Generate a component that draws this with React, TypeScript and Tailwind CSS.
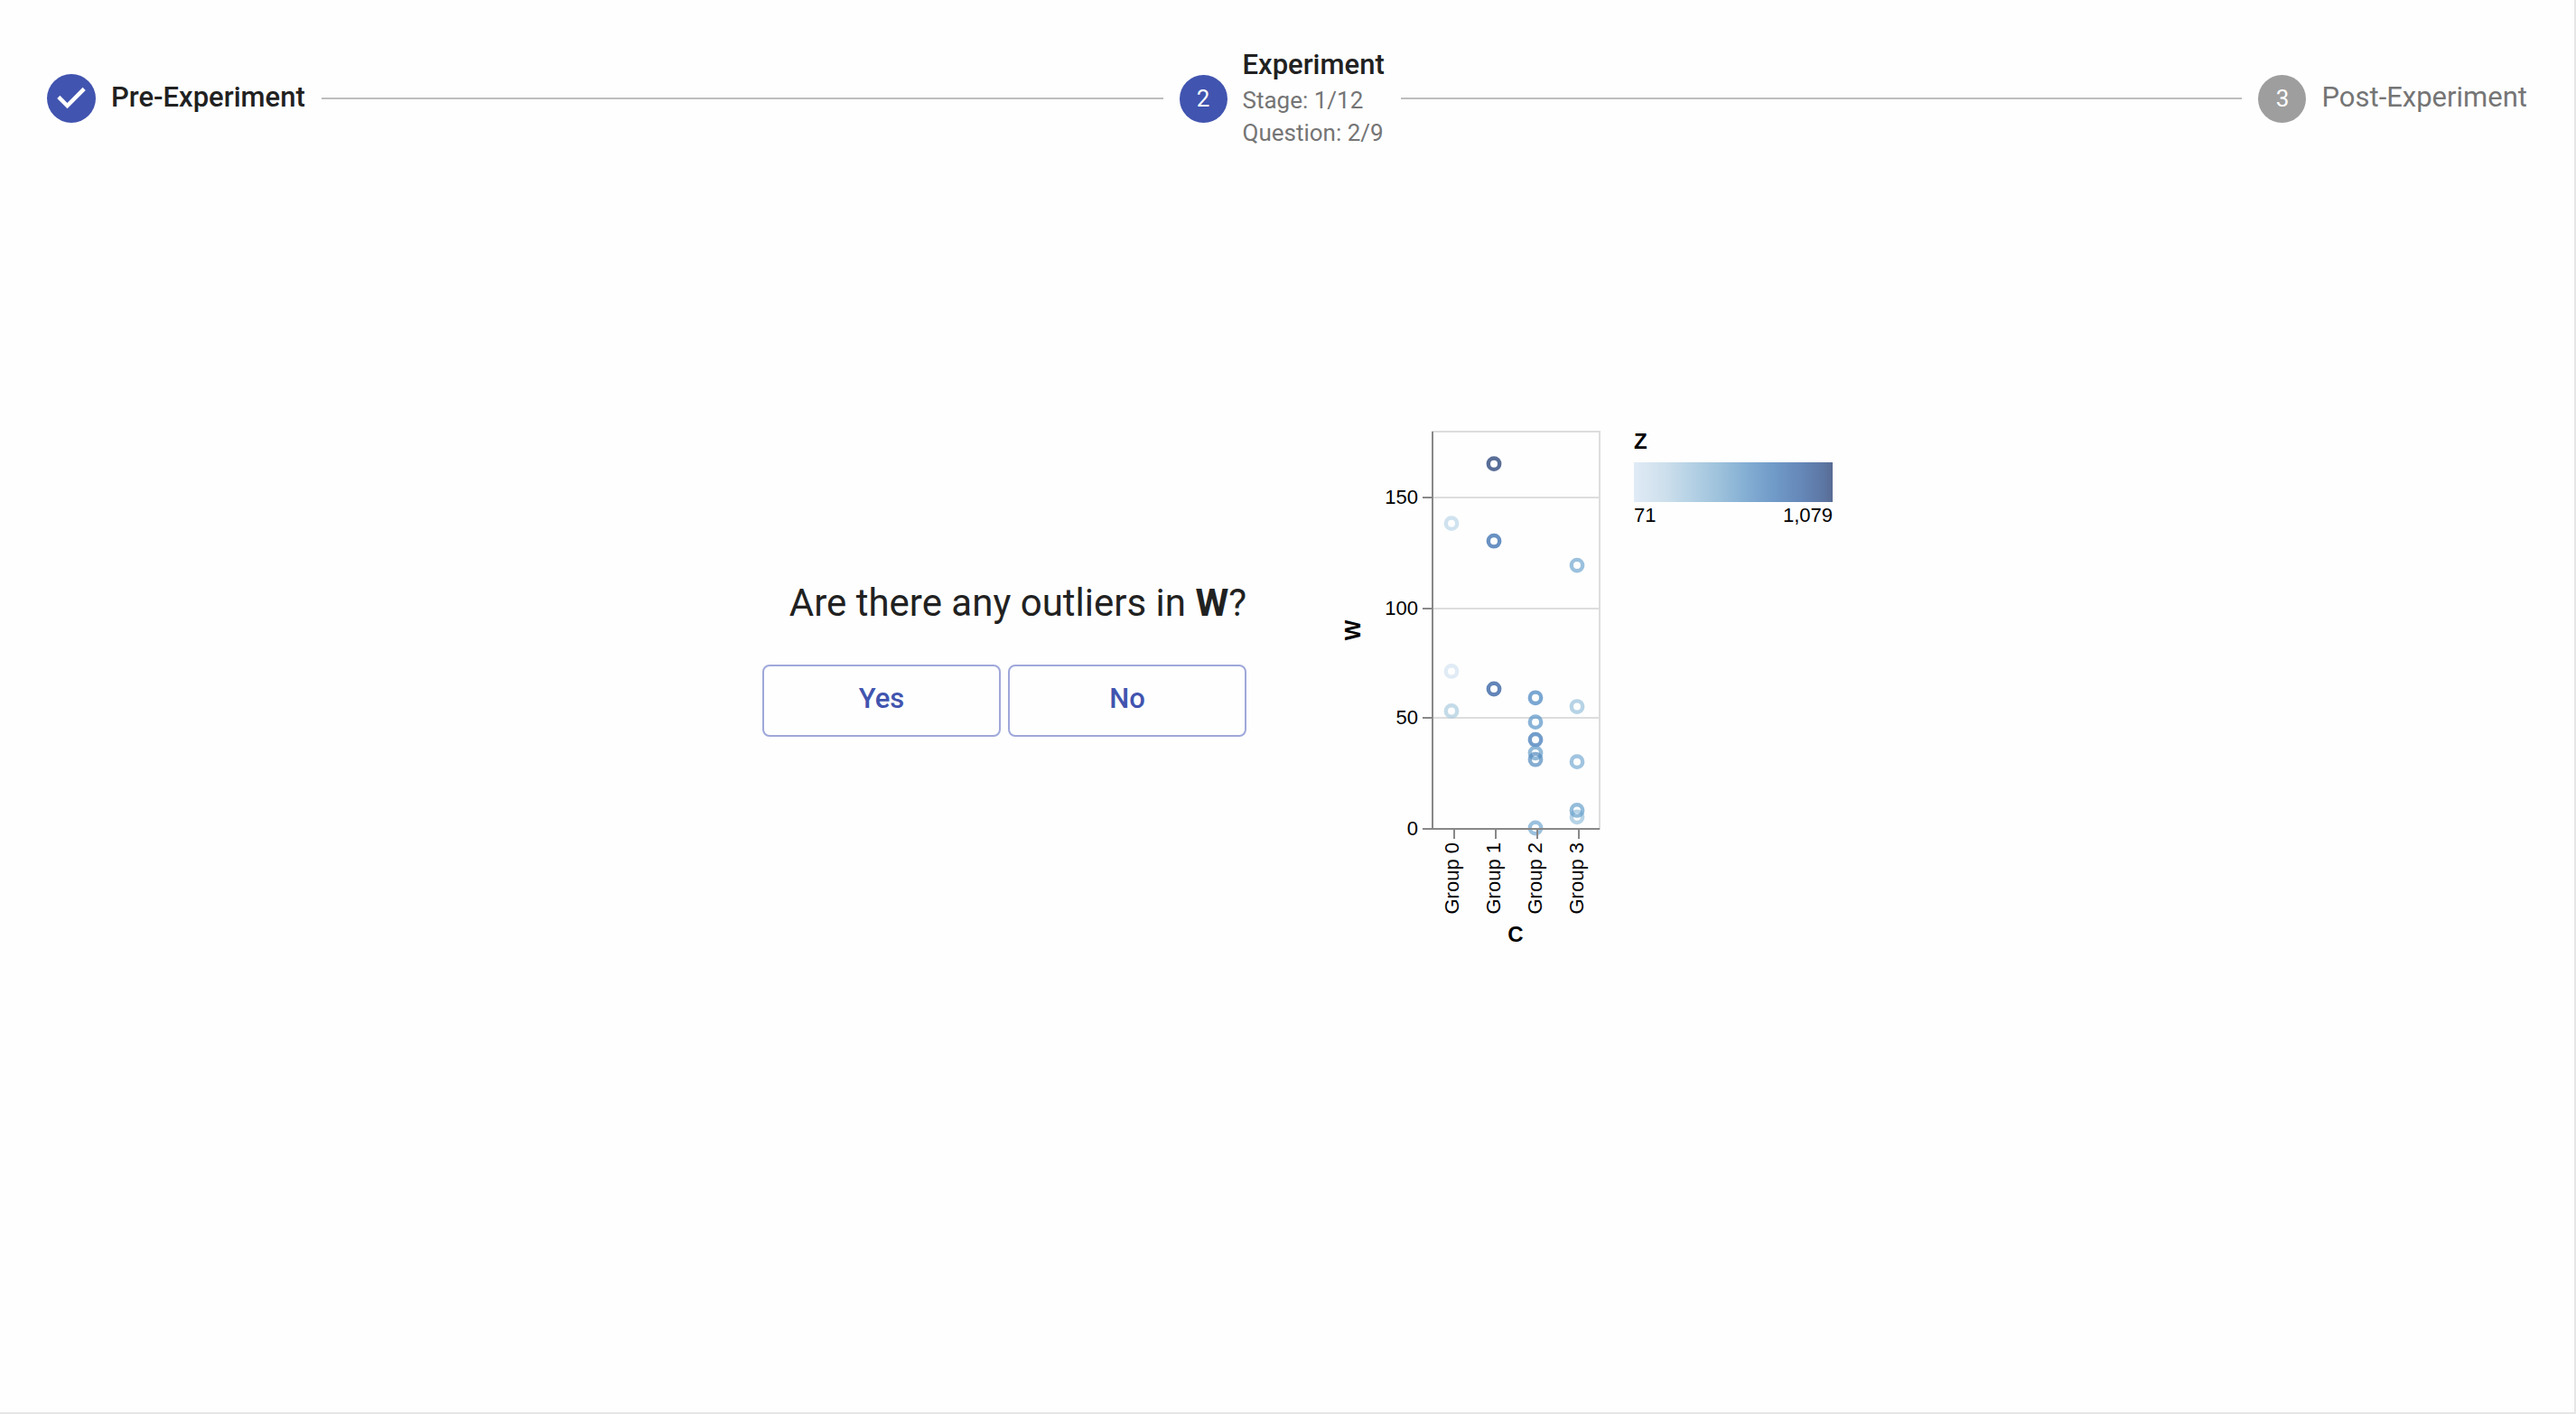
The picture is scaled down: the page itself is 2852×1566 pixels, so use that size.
import React from "react";

type Point = { x: number; value: number; color: string };

const GROUP_X = [137, 184, 230, 276];
const TICK_X = [140, 186, 232, 278];

const POINTS: Point[] = [
  { x: GROUP_X[0], value: 138, color: "#bad6e8" },
  { x: GROUP_X[0], value: 71, color: "#d3e2f1" },
  { x: GROUP_X[0], value: 53, color: "#abccde" },
  { x: GROUP_X[1], value: 165, color: "#13316c" },
  { x: GROUP_X[1], value: 130, color: "#2a63a8" },
  { x: GROUP_X[1], value: 63, color: "#205198" },
  { x: GROUP_X[2], value: 59, color: "#4281bf" },
  { x: GROUP_X[2], value: 48, color: "#5894c7" },
  { x: GROUP_X[2], value: 40, color: "#3773b5" },
  { x: GROUP_X[2], value: 34, color: "#659dc9" },
  { x: GROUP_X[2], value: 31, color: "#528abf" },
  { x: GROUP_X[2], value: 0, color: "#70a6d0" },
  { x: GROUP_X[3], value: 119, color: "#70a6d0" },
  { x: GROUP_X[3], value: 55, color: "#97c0db" },
  { x: GROUP_X[3], value: 30, color: "#77abd3" },
  { x: GROUP_X[3], value: 5, color: "#97c0db" },
  { x: GROUP_X[3], value: 8, color: "#659fcb" },
];

const Y_TICKS = [
  { label: "150", y: 85 },
  { label: "100", y: 208 },
  { label: "50", y: 329 },
  { label: "0", y: 452 },
];

const yOf = (value: number) => 451 - (value * 440) / 180;

function Chart() {
  return (
    <svg
      width="566"
      height="590"
      viewBox="0 0 566 590"
      role="img"
      aria-label="Scatter plot of W by group C, coloured by Z"
      className="shrink-0 font-['Liberation_Sans',Arial,sans-serif]"
    >
      <defs>
        <linearGradient id="z-scale">
          <stop offset="0" stopColor="#e0ebf6" />
          <stop offset="0.15" stopColor="#cee0ec" />
          <stop offset="0.3" stopColor="#b3d0e4" />
          <stop offset="0.42" stopColor="#9fc3dc" />
          <stop offset="0.55" stopColor="#86b0d4" />
          <stop offset="0.7" stopColor="#719bc8" />
          <stop offset="0.84" stopColor="#6588b9" />
          <stop offset="0.95" stopColor="#5d77a4" />
          <stop offset="1" stopColor="#586c94" />
        </linearGradient>
      </defs>

      <rect x="116" y="12" width="185" height="440" fill="none" stroke="#dddddd" strokeWidth="2" />
      {Y_TICKS.slice(0, 3).map((t) => (
        <line key={t.label} x1="116" x2="301" y1={t.y} y2={t.y} stroke="#dddddd" strokeWidth="2" />
      ))}

      {POINTS.map((p) => (
        <circle
          key={`${p.x}-${p.value}`}
          cx={p.x}
          cy={yOf(p.value)}
          r="6.2"
          fill="none"
          stroke={p.color}
          strokeWidth="4.4"
          opacity="0.7"
        />
      ))}

      <g stroke="#888888" strokeWidth="2">
        <line x1="116" x2="116" y1="12" y2="453" />
        <line x1="115" x2="301" y1="452" y2="452" />
        {Y_TICKS.map((t) => (
          <line key={t.label} x1="105" x2="116" y1={t.y} y2={t.y} />
        ))}
        {TICK_X.map((x) => (
          <line key={x} x1={x} x2={x} y1="452" y2="463" />
        ))}
      </g>

      <g fill="#000000" fontSize="22">
        {Y_TICKS.map((t) => (
          <text key={t.label} x="100" y={t.y + 7} textAnchor="end">
            {t.label}
          </text>
        ))}
        {TICK_X.map((x, i) => (
          <text key={x} transform={`translate(${x + 5} 467) rotate(-90)`} textAnchor="end">
            {`Group ${i}`}
          </text>
        ))}
        <text x="339" y="112">
          71
        </text>
        <text x="559" y="112" textAnchor="end">
          1,079
        </text>
      </g>

      <g fill="#000000" fontSize="24" fontWeight="700">
        <text x="208" y="577" textAnchor="middle">
          C
        </text>
        <text transform="translate(36 232) rotate(-90)" textAnchor="middle">
          W
        </text>
        <text x="339" y="31">
          Z
        </text>
      </g>

      <rect x="339" y="46" width="220" height="44" fill="url(#z-scale)" />
    </svg>
  );
}

function NumberBadge({ value, active }: { value: number; active?: boolean }) {
  return (
    <span
      className={`flex size-[53px] shrink-0 items-center justify-center rounded-full text-[26px] leading-none text-white ${
        active ? "bg-[#4154af]" : "bg-[#9e9e9e]"
      }`}
    >
      {value}
    </span>
  );
}

function Connector() {
  return <li aria-hidden="true" className="mx-[18px] h-0.5 flex-1 bg-[#bdbdbd]" />;
}

function AnswerButton({ children }: { children: React.ReactNode }) {
  return (
    <button
      type="button"
      className="h-20 w-[264px] rounded-lg border-2 border-[#9fa8da] pb-1 text-[31px] font-medium text-[#4154af]"
    >
      {children}
    </button>
  );
}

export default function App() {
  return (
    <div className="min-h-screen border-r-2 border-b-2 border-[#e6e6e6] bg-[#fefefe] font-[Roboto,sans-serif] text-[#212121]">
      <header>
        <ol className="flex items-center px-[52px] pt-[53px]">
          <li className="flex items-center gap-[17px]">
            <svg viewBox="0 0 24 24" className="size-[54px] shrink-0" aria-hidden="true">
              <circle cx="12" cy="12" r="12" fill="#4154af" />
              <path d="M10 17l-5-5 1.4-1.4 3.6 3.6 7.6-7.6L19 8z" fill="#ffffff" />
            </svg>
            <span className="pb-0.5 text-[31px] font-medium">Pre-Experiment</span>
          </li>
          <Connector />
          <li className="flex items-center gap-[17px]" aria-current="step">
            <NumberBadge value={2} active />
            <div>
              <div className="mb-0.5 text-[31px] leading-[38px] font-medium">Experiment</div>
              <div className="text-[26px] leading-9 text-[#757575]">Stage: 1/12</div>
              <div className="text-[26px] leading-9 text-[#757575]">Question: 2/9</div>
            </div>
          </li>
          <Connector />
          <li className="flex items-center gap-[17px]">
            <NumberBadge value={3} />
            <span className="pb-0.5 text-[31px] text-[#757575]">Post-Experiment</span>
          </li>
        </ol>
      </header>

      <main className="grid grid-cols-2 items-start gap-[90px] pt-[301px]">
        <section className="flex flex-col items-end pt-[178px]">
          <h1 className="text-[42px] leading-[48px]">
            Are there any outliers in <strong className="font-bold">W</strong>?
          </h1>
          <div className="mt-11 flex gap-2">
            <AnswerButton>Yes</AnswerButton>
            <AnswerButton>No</AnswerButton>
          </div>
        </section>
        <Chart />
      </main>
    </div>
  );
}
